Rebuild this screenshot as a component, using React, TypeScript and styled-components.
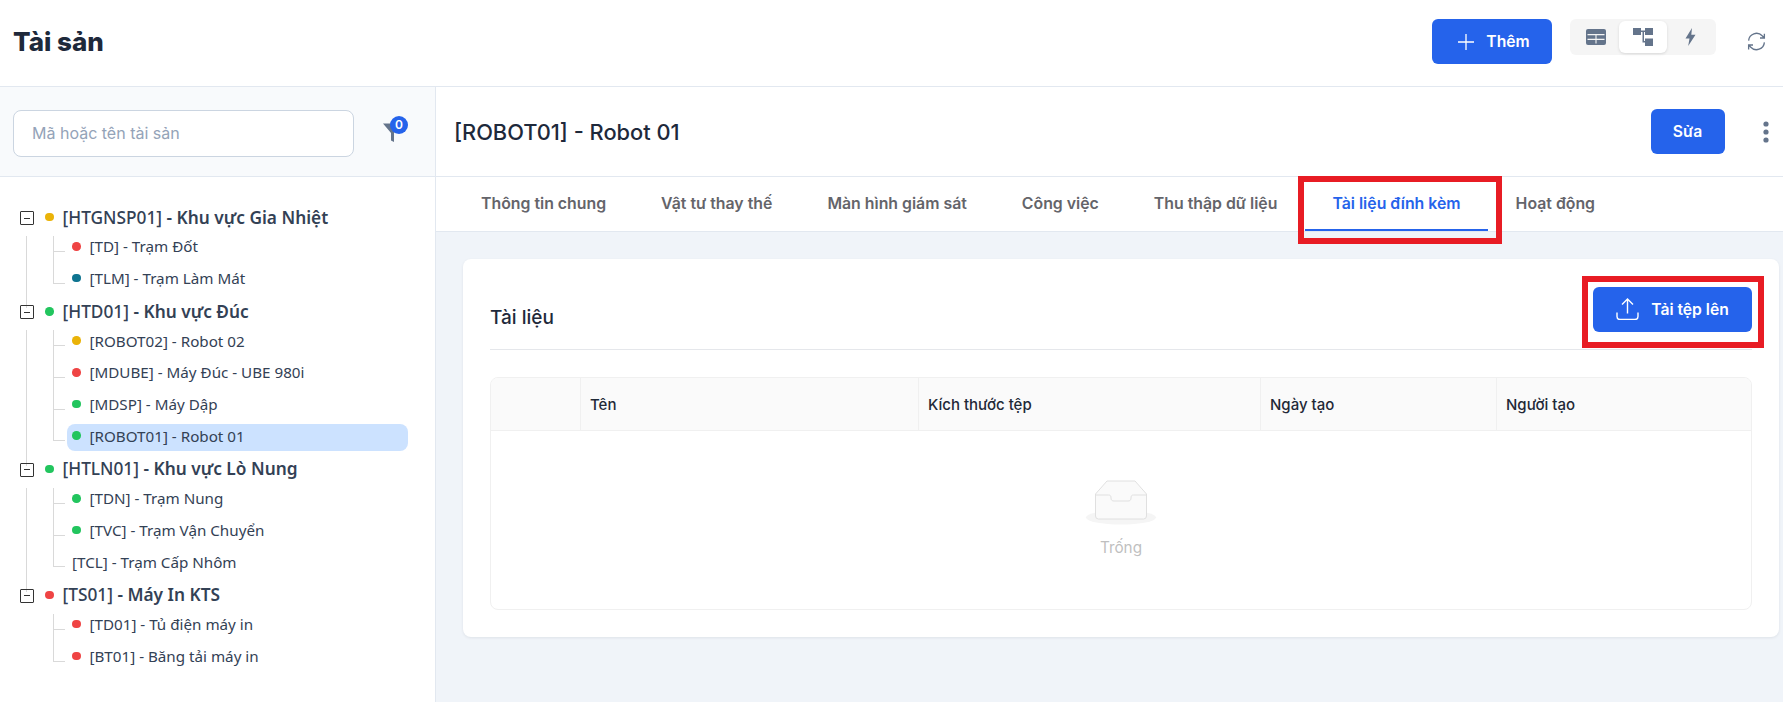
import React from "react";
import styled, { createGlobalStyle } from "styled-components";

const GlobalStyle = createGlobalStyle`
  html, body {
    margin: 0;
    padding: 0;
    background: #fff;
    font-family: Inter, "Noto Sans", sans-serif;
  }
  * {
    box-sizing: border-box;
  }
`;

const Page = styled.div`
  width: 1783px;
  height: 702px;
  display: flex;
  flex-direction: column;
  overflow: hidden;
`;

const TopBar = styled.header`
  height: 87px;
  flex: none;
  display: flex;
  align-items: center;
  padding: 0 0 3px 13px;
  border-bottom: 1px solid #e2e8f0;
`;

const PageTitle = styled.h1`
  margin: 0;
  font-size: 26px;
  font-weight: 800;
  color: #1e293b;
  flex: 1;
`;

const PrimaryButton = styled.button`
  display: flex;
  align-items: center;
  justify-content: center;
  height: 45px;
  border: none;
  border-radius: 6px;
  background: #2563eb;
  color: #fff;
  font-family: Inter, sans-serif;
  font-size: 15.7px;
  font-weight: 600;
`;

const AddButton = styled(PrimaryButton)`
  width: 120px;
  gap: 12px;
  padding-left: 10px;
`;

const ViewSwitch = styled.div`
  display: flex;
  width: 146px;
  height: 36px;
  margin: -9px 0 0 18px;
  padding: 2px;
  background: #f5f5f5;
  border-radius: 6px;
`;

const ViewOption = styled.div<{ $active?: boolean }>`
  flex: 1;
  display: flex;
  align-items: center;
  justify-content: center;
  color: #64748b;
  border-radius: 6px;
  background: ${(p) => (p.$active ? "#fff" : "transparent")};
  box-shadow: ${(p) => (p.$active ? "0 1px 3px rgba(0,0,0,0.12)" : "none")};
`;

const RefreshSlot = styled.div`
  width: 67px;
  display: flex;
  justify-content: center;
  color: #64748b;
  padding: 0 12px 0 25px;
`;

const Body = styled.div`
  flex: 1;
  display: flex;
  min-height: 0;
`;

const Sidebar = styled.aside`
  width: 436px;
  flex: none;
  border-right: 1px solid #e2e8f0;
  display: flex;
  flex-direction: column;
`;

const SearchPanel = styled.div`
  height: 90px;
  flex: none;
  display: flex;
  align-items: center;
  padding: 3px 0 0 13px;
  background: #f8fafc;
  border-bottom: 1px solid #e2e8f0;
`;

const SearchInput = styled.div`
  width: 341px;
  height: 47px;
  display: flex;
  align-items: center;
  padding-left: 18px;
  background: #fff;
  border: 1px solid #cbd5e1;
  border-radius: 8px;
  color: #94a3b8;
  font-size: 16px;
`;

const FilterButton = styled.div`
  position: relative;
  margin: -3px 0 0 29px;
  width: 20px;
  height: 20px;
  color: #64748b;
  display: flex;
`;

const FilterBadge = styled.span`
  position: absolute;
  top: -6px;
  left: 7px;
  width: 18px;
  height: 18px;
  border-radius: 50%;
  background: #2563eb;
  color: #fff;
  font-size: 12px;
  font-weight: 600;
  display: flex;
  align-items: center;
  justify-content: center;
`;

const Tree = styled.div`
  padding: 27px 0 0 20px;
  font-family: "Noto Sans", sans-serif;
`;

const TreeGroup = styled.div<{ $last?: boolean }>`
  position: relative;
  margin-bottom: 3px;
  &::before {
    content: "";
    display: ${(p) => (p.$last ? "none" : "block")};
    position: absolute;
    left: 6px;
    top: 32px;
    bottom: -13px;
    width: 1px;
    background: #d9d9d9;
  }
`;

const GroupRow = styled.div`
  height: 28px;
  display: flex;
  align-items: center;
`;

const Toggle = styled.span`
  width: 14px;
  height: 14px;
  flex: none;
  border: 1px solid #333;
  border-radius: 1px;
  display: flex;
  align-items: center;
  justify-content: center;
  &::after {
    content: "";
    width: 6px;
    height: 1px;
    background: #333;
  }
`;

const Dot = styled.span<{ $color: string }>`
  width: 8.5px;
  height: 8.5px;
  flex: none;
  border-radius: 50%;
  background: ${(p) => p.$color};
`;

const GroupLabel = styled.div`
  margin: -2px 0 0 11px;
  display: flex;
  align-items: center;
  gap: 9px;
  font-size: 17.3px;
  font-weight: 500;
  color: #334155;
  white-space: nowrap;
`;

const GroupName = styled.span`
  font-weight: 600;
`;

const ChildList = styled.div`
  position: relative;
  margin-left: 33px;
  &::before {
    content: "";
    position: absolute;
    left: 0;
    top: 4px;
    bottom: 12px;
    width: 1px;
    background: #d9d9d9;
  }
`;

const ChildRow = styled.div`
  position: relative;
  height: 31.67px;
  padding-left: 14px;
  display: flex;
  align-items: center;
  &::before {
    content: "";
    position: absolute;
    left: 0;
    top: 19px;
    width: 12px;
    height: 1px;
    background: #d9d9d9;
  }
`;

const ChildLabel = styled.div<{ $selected?: boolean }>`
  width: 341px;
  height: 27px;
  margin-top: 1px;
  padding: 0 0 4px 5px;
  display: flex;
  align-items: center;
  gap: 9px;
  border-radius: 8px;
  background: ${(p) => (p.$selected ? "#cce2ff" : "transparent")};
  font-size: 15.2px;
  color: #334155;
  white-space: nowrap;
`;

const Detail = styled.main`
  flex: 1;
  min-width: 0;
  display: flex;
  flex-direction: column;
`;

const DetailHeader = styled.div`
  height: 90px;
  flex: none;
  display: flex;
  align-items: center;
  padding: 0 14.5px 0 18px;
  border-bottom: 1px solid #e2e8f0;
`;

const DetailTitle = styled.h2`
  flex: 1;
  margin: 0;
  font-size: 21.8px;
  font-weight: 500;
  color: #1e293b;
`;

const EditButton = styled(PrimaryButton)`
  width: 74px;
`;

const MoreSlot = styled.div`
  width: 44px;
  display: flex;
  justify-content: flex-end;
  color: #64748b;
  padding-top: 1px;
`;

const TabBar = styled.nav`
  height: 55px;
  flex: none;
  display: flex;
  padding-left: 17.5px;
  border-bottom: 1px solid #e2e8f0;
`;

const Tab = styled.div<{ $active?: boolean }>`
  position: relative;
  height: 54px;
  padding: 0 27.5px;
  display: flex;
  align-items: center;
  font-size: 15.85px;
  font-weight: 600;
  color: ${(p) => (p.$active ? "#2563eb" : "#64646a")};
  white-space: nowrap;
  border-bottom: 2px solid ${(p) => (p.$active ? "#2563eb" : "transparent")};
`;

const Callout = styled.span`
  position: absolute;
  border: 6px solid #e81c24;
  pointer-events: none;
`;

const TabCallout = styled(Callout)`
  left: -7px;
  right: -14px;
  top: -1px;
  bottom: -15px;
`;

const ButtonCallout = styled(Callout)`
  left: -11px;
  right: -12px;
  top: -11px;
  bottom: -16px;
`;

const Content = styled.div`
  flex: 1;
  background: #f0f4f9;
  padding: 27px 4px 0 27px;
`;

const Card = styled.section`
  height: 378px;
  padding: 0 27px;
  background: #fff;
  border-radius: 8px;
  box-shadow: 0 1px 3px rgba(15, 23, 42, 0.08);
`;

const CardHead = styled.div`
  height: 91px;
  display: flex;
  align-items: center;
  justify-content: space-between;
  padding-top: 27px;
  border-bottom: 1px solid #e5e7eb;
`;

const CardTitle = styled.h3`
  margin: 0;
  font-size: 19px;
  font-weight: 500;
  color: #1e293b;
`;

const UploadWrap = styled.div`
  position: relative;
  margin-bottom: 17px;
`;

const UploadButton = styled(PrimaryButton)`
  width: 159px;
  gap: 12px;
`;

const Table = styled.div`
  margin-top: 27px;
  height: 233px;
  border: 1px solid #f0f0f0;
  border-radius: 8px;
  overflow: hidden;
  display: flex;
  flex-direction: column;
`;

const HeadRow = styled.div`
  height: 53px;
  flex: none;
  display: grid;
  grid-template-columns: 90px 338px 342px 236px 1fr;
  background: #fafafa;
  border-bottom: 1px solid #f0f0f0;
`;

const HeadCell = styled.div`
  display: flex;
  align-items: center;
  padding-left: 9px;
  font-size: 15px;
  font-weight: 500;
  color: #1f2937;
  border-right: 1px solid #f0f0f0;
  &:last-child {
    border-right: none;
  }
`;

const EmptyState = styled.div`
  flex: 1;
  display: flex;
  flex-direction: column;
  align-items: center;
  padding-top: 49px;
`;

const EmptyText = styled.div`
  margin-top: 12px;
  font-size: 15.3px;
  color: #bfbfbf;
`;

type Child = { label: string; color?: string; selected?: boolean };
type Group = { code: string; name: string; color: string; children: Child[] };

const RED = "#ef4444";
const GREEN = "#22c55e";
const AMBER = "#eab308";

const groups: Group[] = [
  {
    code: "[HTGNSP01]",
    name: "- Khu vực Gia Nhiệt",
    color: AMBER,
    children: [
      { label: "[TD] - Trạm Đốt", color: RED },
      { label: "[TLM] - Trạm Làm Mát", color: "#0e7490" },
    ],
  },
  {
    code: "[HTD01]",
    name: "- Khu vực Đúc",
    color: GREEN,
    children: [
      { label: "[ROBOT02] - Robot 02", color: AMBER },
      { label: "[MDUBE] - Máy Đúc - UBE 980i", color: RED },
      { label: "[MDSP] - Máy Dập", color: GREEN },
      { label: "[ROBOT01] - Robot 01", color: GREEN, selected: true },
    ],
  },
  {
    code: "[HTLN01]",
    name: "- Khu vực Lò Nung",
    color: GREEN,
    children: [
      { label: "[TDN] - Trạm Nung", color: GREEN },
      { label: "[TVC] - Trạm Vận Chuyển", color: GREEN },
      { label: "[TCL] - Trạm Cấp Nhôm" },
    ],
  },
  {
    code: "[TS01]",
    name: "- Máy In KTS",
    color: RED,
    children: [
      { label: "[TD01] - Tủ điện máy in", color: RED },
      { label: "[BT01] - Băng tải máy in", color: RED },
    ],
  },
];

const tabs = [
  "Thông tin chung",
  "Vật tư thay thế",
  "Màn hình giám sát",
  "Công việc",
  "Thu thập dữ liệu",
  "Tài liệu đính kèm",
  "Hoạt động",
];

const columns = ["", "Tên", "Kích thước tệp", "Ngày tạo", "Người tạo"];

const PlusIcon = () => (
  <svg width="16" height="16" viewBox="0 0 16 16" stroke="currentColor" strokeWidth="1.3">
    <path d="M8 0v16M0 8h16" />
  </svg>
);

const TableIcon = () => (
  <svg width="20" height="16" viewBox="0 0 20 16">
    <rect width="20" height="16" rx="2" fill="currentColor" />
    <path d="M1.5 5.6h17M1.5 10.4h17M10 5.6v9" stroke="#f5f5f5" strokeWidth="1.1" fill="none" />
  </svg>
);

const TreeIcon = () => (
  <svg width="20" height="18" viewBox="0 0 20 18" fill="currentColor">
    <path d="M0 0h8v7H0zM12 0h8v7h-8zM12 10.5h8V18h-8z" />
    <path d="M8 2.5h4V4H8zM9.5 2.5H11v12H9.500zM9.5 13h3v1.5h-3z" />
  </svg>
);

const BoltIcon = () => (
  <svg width="11" height="18" viewBox="0 0 11 18" fill="currentColor">
    <path d="M7 0 0.5 10.5h4L3.2 18 10.5 6.8H6.3z" />
  </svg>
);

const RefreshIcon = () => (
  <svg width="21" height="21" viewBox="0 0 24 24" fill="none" stroke="currentColor" strokeWidth="1.5">
    <path d="M3 11a9 9 0 0 1 15.5-5.5L21 8M21 3v5h-5M21 13a9 9 0 0 1-15.5 5.5L3 16M3 21v-5h5" />
  </svg>
);

const FilterIcon = () => (
  <svg width="20" height="20" viewBox="0 0 20 20" fill="currentColor">
    <path d="M0 1.5h20l-9 9.5v9l-3-1.5v-7.5z" />
  </svg>
);

const MoreIcon = () => (
  <svg width="6" height="22" viewBox="0 0 6 22" fill="currentColor">
    <circle cx="3" cy="3" r="2.6" />
    <circle cx="3" cy="11" r="2.6" />
    <circle cx="3" cy="19" r="2.6" />
  </svg>
);

const UploadIcon = () => (
  <svg width="23" height="22" viewBox="0 0 23 22" fill="none" stroke="currentColor" strokeWidth="1.4">
    <path d="M11.5 15.5V1M6 6.5 11.5 1 17 6.5M1 14.5v4a3 3 0 0 0 3 3h15a3 3 0 0 0 3-3v-4" />
  </svg>
);

const EmptyIcon = () => (
  <svg width="72" height="46" viewBox="0 0 72 46">
    <ellipse cx="36" cy="37.5" rx="35" ry="7" fill="#f5f5f5" />
    <path d="M10.5 14 22 1h28l11.5 13v22a3 3 0 0 1-3 3h-45a3 3 0 0 1-3-3z" fill="#fafafa" stroke="#e0e0e0" strokeWidth="1" />
    <path d="M10.5 15h13c2 0 2.5 1 2.5 3s1 3 3 3h14c2 0 3-1 3-3s.5-3 2.5-3h13" fill="none" stroke="#e0e0e0" strokeWidth="1" />
  </svg>
);

const App = () => {
  return (
    <Page>
      <GlobalStyle />
      <TopBar>
        <PageTitle>Tài sản</PageTitle>
        <AddButton>
          <PlusIcon />
          Thêm
        </AddButton>
        <ViewSwitch>
          <ViewOption>
            <TableIcon />
          </ViewOption>
          <ViewOption $active>
            <TreeIcon />
          </ViewOption>
          <ViewOption>
            <BoltIcon />
          </ViewOption>
        </ViewSwitch>
        <RefreshSlot>
          <RefreshIcon />
        </RefreshSlot>
      </TopBar>
      <Body>
        <Sidebar>
          <SearchPanel>
            <SearchInput>Mã hoặc tên tài sản</SearchInput>
            <FilterButton>
              <FilterIcon />
              <FilterBadge>0</FilterBadge>
            </FilterButton>
          </SearchPanel>
          <Tree>
            {groups.map((group, i) => (
              <TreeGroup key={group.code} $last={i === groups.length - 1}>
                <GroupRow>
                  <Toggle />
                  <GroupLabel>
                    <Dot $color={group.color} />
                    <span>
                      {group.code} <GroupName>{group.name}</GroupName>
                    </span>
                  </GroupLabel>
                </GroupRow>
                <ChildList>
                  {group.children.map((child) => (
                    <ChildRow key={child.label}>
                      <ChildLabel $selected={child.selected}>
                        {child.color && <Dot $color={child.color} />}
                        {child.label}
                      </ChildLabel>
                    </ChildRow>
                  ))}
                </ChildList>
              </TreeGroup>
            ))}
          </Tree>
        </Sidebar>
        <Detail>
          <DetailHeader>
            <DetailTitle>[ROBOT01] - Robot 01</DetailTitle>
            <EditButton>Sửa</EditButton>
            <MoreSlot>
              <MoreIcon />
            </MoreSlot>
          </DetailHeader>
          <TabBar>
            {tabs.map((tab, i) => (
              <Tab key={tab} $active={i === 5}>
                {tab}
                {i === 5 && <TabCallout />}
              </Tab>
            ))}
          </TabBar>
          <Content>
            <Card>
              <CardHead>
                <CardTitle>Tài liệu</CardTitle>
                <UploadWrap>
                  <UploadButton>
                    <UploadIcon />
                    Tải tệp lên
                  </UploadButton>
                  <ButtonCallout />
                </UploadWrap>
              </CardHead>
              <Table>
                <HeadRow>
                  {columns.map((col) => (
                    <HeadCell key={col || "blank"}>{col}</HeadCell>
                  ))}
                </HeadRow>
                <EmptyState>
                  <EmptyIcon />
                  <EmptyText>Trống</EmptyText>
                </EmptyState>
              </Table>
            </Card>
          </Content>
        </Detail>
      </Body>
    </Page>
  );
};

export default App;
